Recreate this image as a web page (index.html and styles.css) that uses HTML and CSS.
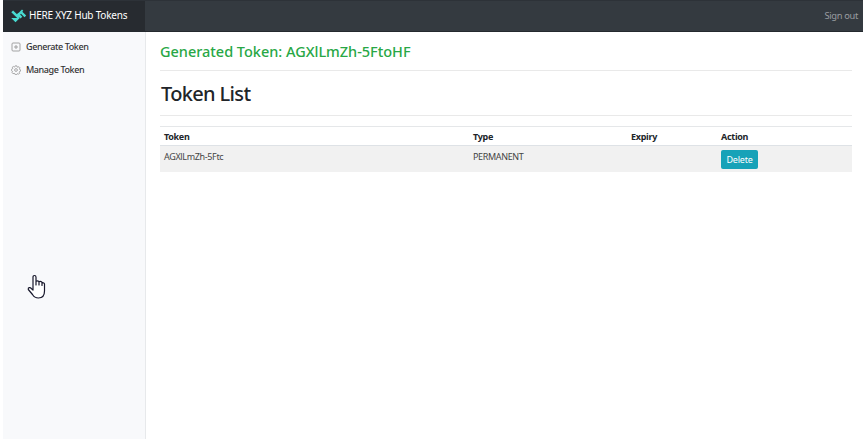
FILE: index.html
```html
<!DOCTYPE html>
<html lang="en">
<head>
<meta charset="utf-8">
<title>HERE XYZ Hub Tokens</title>
<link rel="stylesheet" href="styles.css">
</head>
<body>
<header class="navbar">
  <a class="brand">
    <svg class="logo" viewBox="0 0 16 14" width="16" height="14"><path d="M0.200 9h8.600L4.500 13.300zM0.300 3.200L2.100 1.400 8.800 8 7 9.800zM5.600 5.600L7.400 3.800 11.300 7.700 9.500 9.500zM9.200 2.200L11 0.400 12.300 1.700 11.300 2.700 15.200 6.600 13.500 8.300 10 4.800 8.200 6.500 6.600 4.900z" fill="#48dad0"/></svg>
    <span>HERE XYZ Hub Tokens</span>
  </a>
  <a class="signout">Sign out</a>
</header>
<div class="layout">
  <nav class="sidebar">
    <a class="nav-link">
      <svg viewBox="0 0 10 10" class="icon"><rect x="1" y="1" width="8" height="8" rx="1"/><path d="M5 3v4M3 5h4"/></svg>
      <span>Generate Token</span>
    </a>
    <a class="nav-link">
      <svg viewBox="0 0 24 24" class="icon gear"><circle cx="12" cy="12" r="3.3"/><path d="M10 2h4l.6 2.8 2 .8L19 4l2.6 2.800-1.400 2.500.7 1.700 2.100.7v3l-2.400.8-.8 2 1.200 2.300-2.400 2.200-2.400-1.300-1.800.7L14 23h-4l-.8-2.400-1.900-.8L4.900 21 2.400 18.500l1.300-2.300-.8-1.900L1 13.500v-3l2.400-.9.8-1.900L3 5.400 5.400 3.500l2.300 1.300 1.800-.8z"/></svg>
      <span>Manage Token</span>
    </a>
  </nav>
  <main class="content">
    <h2 class="generated">Generated Token: AGXlLmZh-5FtoHF</h2>
    <h1 class="title">Token List</h1>
    <table class="tokens">
      <colgroup><col class="c-token"><col class="c-type"><col class="c-expiry"><col></colgroup>
      <thead><tr><th>Token</th><th>Type</th><th>Expiry</th><th>Action</th></tr></thead>
      <tbody><tr><td>AGXlLmZh-5Ftc</td><td>PERMANENT</td><td></td><td><button class="delete">Delete</button></td></tr></tbody>
    </table>
  </main>
</div>
<svg class="cursor" viewBox="0 0 20 26" width="20" height="26"><path d="M6 15V3.200Q6 1.500 7.500 1.500T9 3.200V11V7.300Q10.500 6.500 12 7.500V11V7.800Q13.500 7 15 8.200V11.500V8.700Q17.500 8.500 17.500 10V17Q17.500 24 11.500 24Q7.500 24 5.500 20.500L1.300 15.500Q1 14 2.200 13.700T4.500 14.700L6 16z" fill="#fff" stroke="#17172b" stroke-width="1.200" stroke-linejoin="round"/></svg>
</body>
</html>
```

FILE: styles.css
```css
* { box-sizing: border-box; }
body {
  margin: 0;
  padding-left: 3px;
  height: 439px;
  overflow: hidden;
  display: flex;
  flex-direction: column;
  background: #fff;
  color: #212529;
  font-family: "Noto Sans", "Open Sans", sans-serif;
  font-size: 9px;
}
.navbar {
  display: flex;
  justify-content: space-between;
  height: 32px;
  flex: none;
  background: #343a40;
  border-top: 1px solid #2d3238;
  border-bottom: 1px solid #24292e;
}
.brand {
  width: 142px;
  display: flex;
  align-items: center;
  padding: 0 0 2px 8px;
  gap: 2px;
  background: #272b30;
  color: #fff;
  font-size: 10px;
  letter-spacing: -0.220px;
  white-space: nowrap;
}
.logo { margin-top: 2px; }
.signout {
  align-self: center;
  padding: 0 5px 1px 0;
  color: #9a9da0;
  font-size: 9.300px;
  letter-spacing: -0.320px;
}
.layout { display: flex; flex: 1; }
.sidebar {
  width: 143px;
  padding-top: 3px;
  background: #f8f9fb;
  border-right: 1px solid #e7e9eb;
}
.nav-link {
  display: flex;
  align-items: center;
  height: 23px;
  padding-left: 8px;
  gap: 5px;
  color: #333;
  font-weight: 500;
  letter-spacing: -0.400px;
}
.icon {
  width: 10px;
  height: 10px;
  fill: none;
  stroke: #999;
  stroke-width: 0.900;
}
.gear { stroke-width: 2; }
.content { flex: 1; padding: 0 11px 0 15px; margin-left: -1px; }
.generated, .title { margin: 0; font-weight: 500; white-space: nowrap; }
.generated {
  height: 39px;
  line-height: 39px;
  border-bottom: 1px solid #e9e9e9;
  color: #28a745;
  font-size: 14.500px;
  letter-spacing: -0.020px;
}
.title {
  height: 45px;
  line-height: 45px;
  border-bottom: 1px solid #e9e9e9;
  font-size: 20px;
  letter-spacing: -0.650px;
  text-indent: 1px;
}
.tokens {
  width: 100%;
  margin-top: 10px;
  table-layout: fixed;
  border-collapse: separate;
  border-spacing: 0;
}
.c-token { width: 309px; }
.c-type { width: 158px; }
.c-expiry { width: 90px; }
th, td { padding: 0 4px; text-align: left; }
th {
  height: 20px;
  border-top: 1px solid #e5e7e9;
  border-bottom: 1px solid #dee2e6;
  font-weight: 700;
  font-size: 9px;
  letter-spacing: -0.300px;
}
td {
  height: 26px;
  padding-top: 4px;
  background: #f1f1f1;
  color: #444;
  vertical-align: top;
  line-height: 13px;
  letter-spacing: -0.350px;
}
.delete {
  display: block;
  width: 37px;
  height: 19px;
  padding: 0;
  border: 0;
  border-radius: 2px;
  background: #17a2b8;
  color: #fff;
  font: 9px "Noto Sans", sans-serif;
  letter-spacing: -0.200px;
}
.cursor { position: absolute; left: 27px; top: 274px; }
```
